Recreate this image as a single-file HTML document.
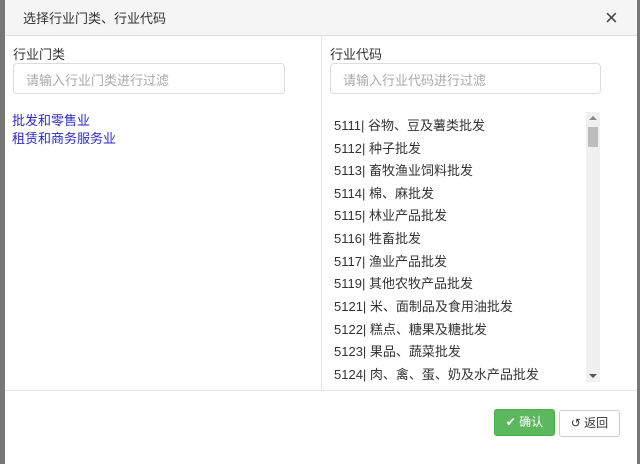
<!DOCTYPE html>
<html><head><meta charset="utf-8"><style>
*{box-sizing:border-box;margin:0;padding:0}
body{width:640px;height:464px;overflow:hidden;background:#777;font-family:"Liberation Sans","Noto Sans CJK SC",sans-serif;font-size:13px;color:#333;position:relative}
.m{position:absolute;left:5px;top:0;width:632px;height:464px;background:#fff}
.h{position:absolute;left:0;top:0;width:632px;height:36px;background:#f5f5f5;border-bottom:1px solid #e0e0e0}
.h .t{position:absolute;left:18px;top:8px;font-size:13px;color:#333}
.x{position:absolute;left:600px;top:5px;font-size:22px;color:#444}
.div{position:absolute;left:316px;top:36px;width:1px;height:354px;background:#e5e5e5}
.fb{position:absolute;left:0;top:390px;width:632px;height:1px;background:#e5e5e5}
.lab{position:absolute;font-size:13px;color:#333}
.inp{position:absolute;height:31px;border:1px solid #ddd;border-radius:4px;color:#aaa;padding:6px 12px;font-size:13px}
.lk{position:absolute;left:7px;color:#2a2acc;font-size:13px}
.it{position:absolute;left:329px;font-size:13px;color:#333}
.sb{position:absolute;left:581px;top:112px;width:14px;height:270px;background:#f0f0f0}
.th{position:absolute;left:2px;top:15px;width:10px;height:20px;background:#bdbdbd}
.btn{position:absolute;height:27px;border-radius:3px;font-size:12px;line-height:25px;text-align:center}
</style></head><body>
<div class="m">
<div class="h"><span class="t">选择行业门类、行业代码</span><span class="x">×</span></div>
<div class="div"></div>
<div class="lab" style="left:8px;top:44px">行业门类</div>
<div class="inp" style="left:8px;top:63px;width:272px">请输入行业门类进行过滤</div>
<div class="lk" style="top:110px">批发和零售业</div>
<div class="lk" style="top:128px">租赁和商务服务业</div>
<div class="lab" style="left:325px;top:44px">行业代码</div>
<div class="inp" style="left:325px;top:63px;width:271px">请输入行业代码进行过滤</div>
<div class="it" style="top:115px">5111| 谷物、豆及薯类批发</div>
<div class="it" style="top:138px">5112| 种子批发</div>
<div class="it" style="top:160px">5113| 畜牧渔业饲料批发</div>
<div class="it" style="top:183px">5114| 棉、麻批发</div>
<div class="it" style="top:205px">5115| 林业产品批发</div>
<div class="it" style="top:228px">5116| 牲畜批发</div>
<div class="it" style="top:251px">5117| 渔业产品批发</div>
<div class="it" style="top:273px">5119| 其他农牧产品批发</div>
<div class="it" style="top:296px">5121| 米、面制品及食用油批发</div>
<div class="it" style="top:319px">5122| 糕点、糖果及糖批发</div>
<div class="it" style="top:341px">5123| 果品、蔬菜批发</div>
<div class="it" style="top:364px">5124| 肉、禽、蛋、奶及水产品批发</div>
<div class="sb"><div class="th"></div>
<div style="position:absolute;left:3px;top:4px;width:0;height:0;border:4px solid transparent;border-bottom-color:#888;border-top:0"></div>
<div style="position:absolute;left:3px;top:262px;width:0;height:0;border:4px solid transparent;border-top-color:#555;border-bottom:0"></div></div>
<div class="fb"></div>
<div class="btn" style="left:489px;top:409px;width:61px;background:#5cb85c;border:1px solid #4cae4c;color:#fff">✔ 确认</div>
<div class="btn" style="left:554px;top:410px;width:61px;background:#fff;border:1px solid #ccc;color:#333">↺ 返回</div>
</div>
</body></html>
